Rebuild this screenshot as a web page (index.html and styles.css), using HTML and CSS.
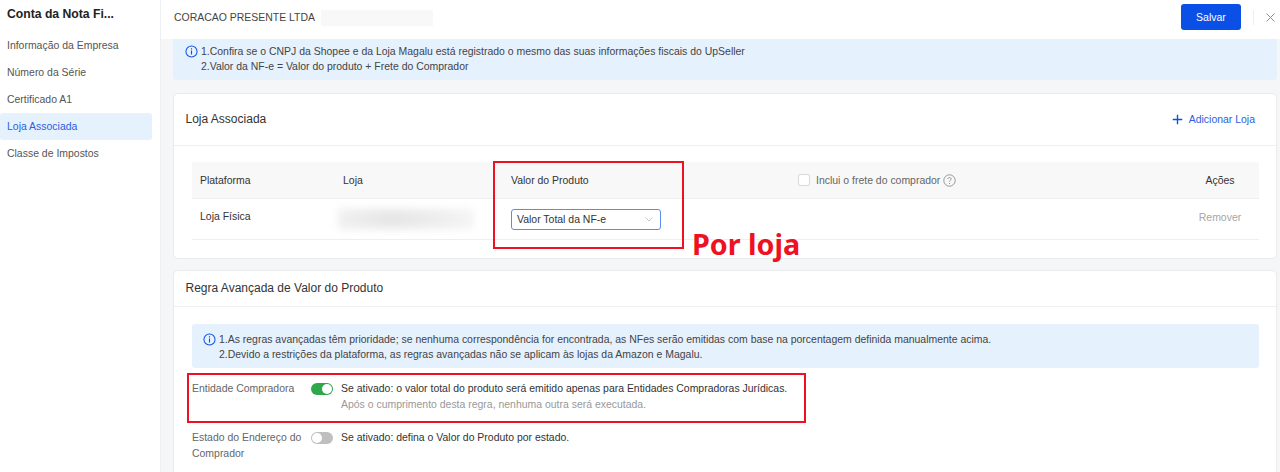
FILE: index.html
```html
<!DOCTYPE html>
<html lang="pt-BR">
<head>
<meta charset="utf-8">
<title>Conta da Nota Fiscal</title>
<link rel="stylesheet" href="styles.css">
</head>
<body>
<div class="app">
  <aside class="sidebar">
    <h1 class="side-title">Conta da Nota Fi...</h1>
    <nav class="side-nav">
      <a class="side-item">Informação da Empresa</a>
      <a class="side-item">Número da Série</a>
      <a class="side-item">Certificado A1</a>
      <a class="side-item active">Loja Associada</a>
      <a class="side-item">Classe de Impostos</a>
    </nav>
  </aside>
  <main class="main">
    <header class="topbar">
      <div class="company">CORACAO PRESENTE LTDA<span class="company-blur"></span></div>
      <div class="top-actions">
        <button class="btn-save">Salvar</button>
        <span class="top-divider"></span>
        <svg class="close" width="9" height="9" viewBox="0 0 9 9"><path d="M.5.5l8 8M8.500.5l-8 8" stroke="#8c8c8c" stroke-width="1" fill="none"/></svg>
      </div>
    </header>
    <div class="content">
      <div class="notice notice-top">
        <svg class="info" width="13" height="13" viewBox="0 0 14 14"><circle cx="7" cy="7" r="6" fill="none" stroke="#0b50e6" stroke-width="1.1"/><path d="M7 6v4.2M7 3.6v1.2" stroke="#0b50e6" stroke-width="1.2" fill="none"/></svg>
        <div>
          <p>1.Confira se o CNPJ da Shopee e da Loja Magalu está registrado o mesmo das suas informações fiscais do UpSeller</p>
          <p>2.Valor da NF-e = Valor do produto + Frete do Comprador</p>
        </div>
      </div>
      <section class="card card-store">
        <div class="card-head head-tall">
          <h2>Loja Associada</h2>
          <a class="add-link">
            <svg width="11" height="11" viewBox="0 0 12 12"><path d="M6 .8v10.4M.8 6h10.4" stroke="#0b50e6" stroke-width="1.500" fill="none"/></svg>
            Adicionar Loja
          </a>
        </div>
        <div class="card-body">
          <div class="row row-head">
            <span>Plataforma</span>
            <span>Loja</span>
            <span>Valor do Produto</span>
            <span class="freight"><i class="checkbox"></i>Inclui o frete do comprador<svg class="help" width="13" height="13" viewBox="0 0 13 13"><circle cx="6.500" cy="6.500" r="5.700" fill="none" stroke="#8c8c8c" stroke-width=".9"/><path d="M4.900 5.100c0-2.100 3.300-2.100 3.300-.1 0 1.200-1.700 1.300-1.700 2.600" fill="none" stroke="#8c8c8c" stroke-width=".9"/><path d="M6.500 9v1" stroke="#8c8c8c" stroke-width="1"/></svg></span>
            <span class="col-action head-action">Ações</span>
          </div>
          <div class="row row-data">
            <span class="cell-up">Loja Física</span>
            <span class="store-blur"></span>
            <span class="select">Valor Total da NF-e<svg width="8" height="5" viewBox="0 0 8 5"><path d="M.5.5L4 4 7.500.5" fill="none" stroke="#bfbfbf" stroke-width=".9"/></svg></span>
            <span></span>
            <span class="col-action remove">Remover</span>
          </div>
        </div>
      </section>
      <section class="card card-rule">
        <div class="card-head head-short"><h2>Regra Avançada de Valor do Produto</h2></div>
        <div class="rule-body">
          <div class="notice notice-rule">
            <svg class="info" width="13" height="13" viewBox="0 0 14 14"><circle cx="7" cy="7" r="6" fill="none" stroke="#0b50e6" stroke-width="1.1"/><path d="M7 6v4.2M7 3.6v1.2" stroke="#0b50e6" stroke-width="1.2" fill="none"/></svg>
            <div>
              <p>1.As regras avançadas têm prioridade; se nenhuma correspondência for encontrada, as NFes serão emitidas com base na porcentagem definida manualmente acima.</p>
              <p>2.Devido a restrições da plataforma, as regras avançadas não se aplicam às lojas da Amazon e Magalu.</p>
            </div>
          </div>
          <div class="rule rule-one">
            <span class="rule-label">Entidade Compradora</span>
            <span class="switch on"></span>
            <div class="rule-text">
              <p>Se ativado: o valor total do produto será emitido apenas para Entidades Compradoras Jurídicas.</p>
              <p class="muted">Após o cumprimento desta regra, nenhuma outra será executada.</p>
            </div>
          </div>
          <div class="rule rule-two">
            <span class="rule-label">Estado do Endereço do Comprador</span>
            <span class="switch"></span>
            <div class="rule-text"><p>Se ativado: defina o Valor do Produto por estado.</p></div>
          </div>
        </div>
      </section>
    </div>
  </main>
</div>
<div class="mark mark-store"></div>
<div class="mark-label">Por loja</div>
<div class="mark mark-rule"></div>
</body>
</html>
```
FILE: styles.css
```css
* { box-sizing: border-box; }
html, body { margin: 0; height: 100%; overflow: hidden; }
body { font-family: "Liberation Sans", Arial, sans-serif; font-size: 10.46px; color: #333; background: #fff; position: relative; }
p, h1, h2 { margin: 0; font-weight: normal; }
.app { display: flex; width: 1280px; height: 472px; }

.sidebar { width: 161px; flex: none; border-right: 1px solid #eeeff1; background: #fff; }
.side-title { font-size: 12.2px; font-weight: bold; color: #222; padding: 7px 7px 0; line-height: 15px; height: 32px; }
.side-nav { display: flex; flex-direction: column; padding-right: 8px; }
.side-item { height: 27px; line-height: 28px; padding-left: 7px; color: #555; border-radius: 3px; }
.side-item.active { background: #e6f1fe; color: #2b60e0; }

.main { flex: 1; min-width: 0; background: #f5f6f7; display: flex; flex-direction: column; overflow: hidden; }
.topbar { height: 39px; flex: none; background: #fff; display: flex; align-items: center; justify-content: space-between; padding: 0 0 5px 13px; }
.company { display: flex; align-items: center; color: #444; padding-top: 1px; }
.company-blur { display: block; width: 112px; height: 16px; margin-left: 6px; background: #f8f8f8; }
.top-actions { display: flex; align-items: center; }
.btn-save { width: 60px; height: 26px; border: 0; border-radius: 3px; background: #0b50e6; color: #fff; font: 10.5px "Liberation Sans", Arial, sans-serif; padding: 0; }
.top-divider { width: 1px; height: 15px; background: #eeeeee; margin: 0 12px; }
.close { margin-right: 5px; }

.content { padding: 0 3px 0 12px; display: flex; flex-direction: column; }
.notice { display: flex; background: #e6f1fe; color: #444; line-height: 15px; }
.notice .info { flex: none; margin-right: 3px; margin-top: 1px; }
.notice-top { height: 41px; padding: 5px 0 0 12px; border-radius: 0 0 3px 3px; }
.card { background: #fff; border: 1px solid #eaebed; border-radius: 5px; }
.card-store { margin-top: 13px; height: 166px; }
.card-rule { margin-top: 11px; height: 240px; }
.card-head { display: flex; align-items: center; justify-content: space-between; border-bottom: 1px solid #eeeff1; padding: 0 21px 2px 11.5px; }
.card-head h2 { font-size: 12px; color: #333; }
.head-tall { height: 52px; }
.head-short { height: 36px; }
.add-link { display: flex; align-items: center; gap: 6px; color: #2b60e0; padding-top: 1px; }

.card-body { padding: 16px 17px 0 18px; }
.row { display: grid; grid-template-columns: 143px 168px 287px 391px 78px; align-items: center; }
.row > span { padding-left: 8px; }
.row-head { height: 37px; background: #f8f8f8; border-bottom: 1px solid #eeeff1; }
.row-data { height: 41px; border-bottom: 1px solid #eeeff1; }
.freight { display: flex; align-items: center; color: #666; }
.checkbox { width: 12px; height: 12px; border: 1px solid #d9d9d9; border-radius: 2px; background: #fff; margin-right: 6px; }
.help { margin-left: 3px; }
.col-action.col-action { padding-left: 0; text-align: center; }
.head-action { color: #333; }
.remove { color: #a6a6a6; margin-top: -4px; }
.cell-up { margin-top: -6px; }
.row > .store-blur { display: block; width: 136px; height: 20px; margin-left: 3px; padding: 0; background: linear-gradient(90deg, #f0f0f0, #e6e6e6 40%, #eeeeee 75%, #f5f5f5); filter: blur(4px); }
.row > .select { display: flex; align-items: center; justify-content: space-between; width: 150px; height: 21px; margin-left: 8px; padding: 0 7px 0 5px; border: 1px solid #5b8bee; border-radius: 3px; background: #fff; color: #333; }

.rule-body { padding: 17px 17px 0 18px; }
.notice-rule { height: 44px; padding: 8px 0 0 11px; border-radius: 3px; }
.rule { display: grid; grid-template-columns: 119px 30px 1fr; line-height: 16px; }
.rule-one { margin-top: 13px; height: 48px; }
.rule-two { margin-top: 1px; }
.rule-label { padding-right: 4px; color: #666; }
.rule-text { color: #333; }
.muted { color: #999; }
.switch { display: block; position: relative; width: 22px; height: 12px; border-radius: 6px; background: #bfbfbf; margin-top: 2px; }
.switch::after { content: ""; position: absolute; left: 1px; top: 1px; width: 10px; height: 10px; border-radius: 50%; background: #fff; }
.switch.on { background: #2ea84a; }
.switch.on::after { left: 11px; }

.mark { position: absolute; border: 2px solid #ed1122; pointer-events: none; }
.mark-store { left: 493px; top: 161px; width: 191px; height: 88px; }
.mark-rule { left: 187px; top: 373px; width: 619px; height: 50px; }
.mark-label { position: absolute; left: 692px; top: 224px; font: bold 28.7px/40px "Noto Sans", sans-serif; color: #ed1122; }
```
